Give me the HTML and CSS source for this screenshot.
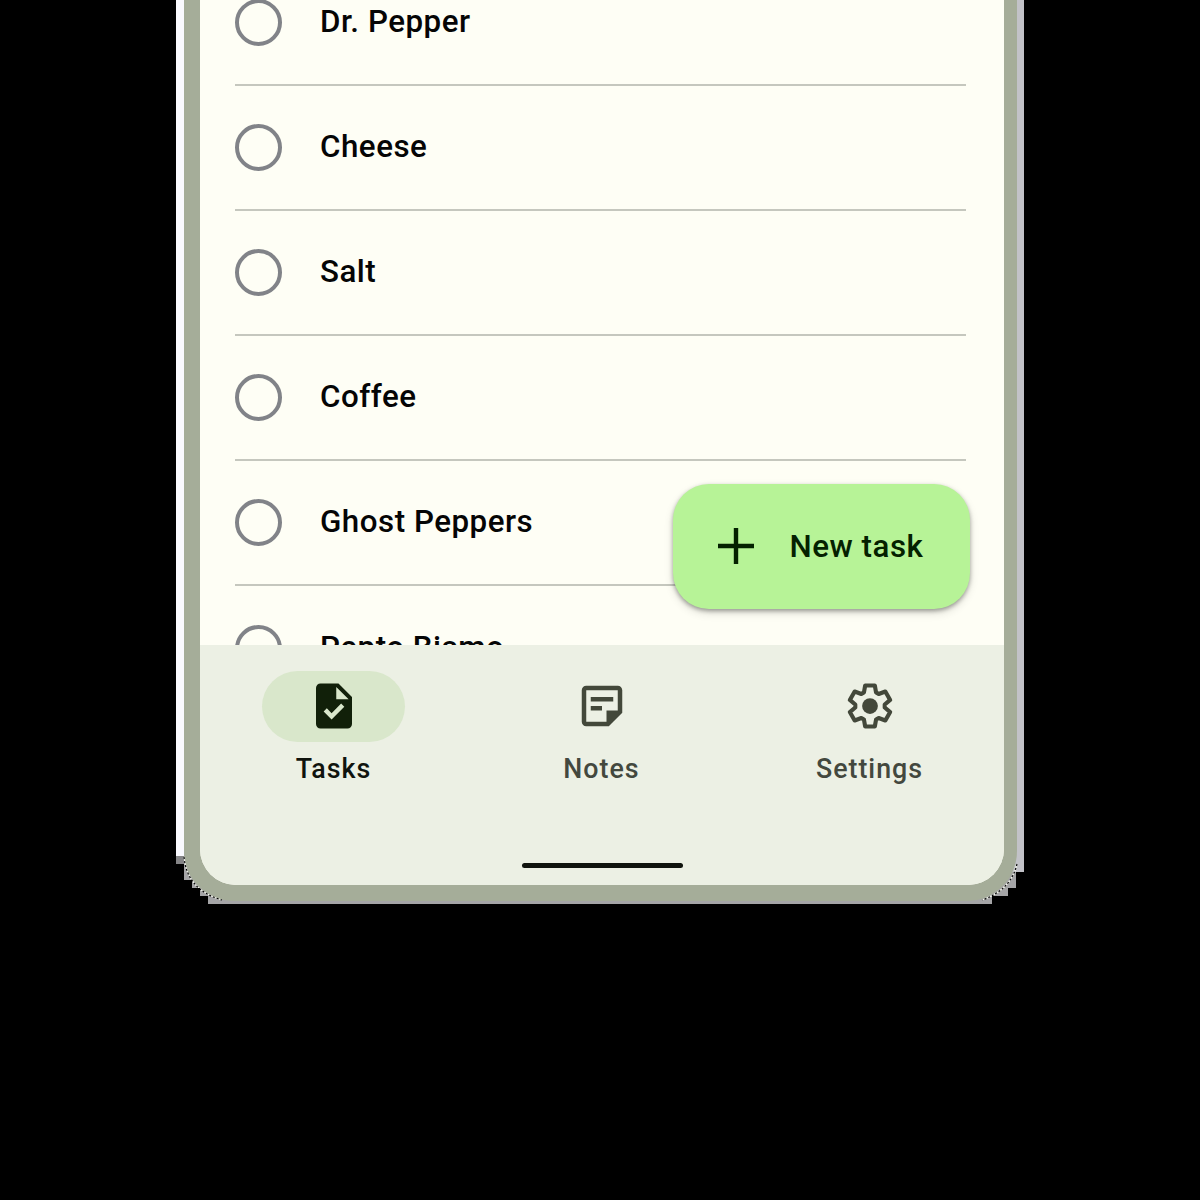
FILE: index.html
```
<!DOCTYPE html>
<html lang="en">
<head>
<meta charset="utf-8">
<title>Tasks</title>
<link rel="stylesheet" href="styles.css">
</head>
<body>
<div class="device">
  <div class="frame">
    <main class="screen">
      <ul class="list">
        <li class="task"><span class="radio"></span><span class="name">Dr. Pepper</span></li>
        <li class="task"><span class="radio"></span><span class="name">Cheese</span></li>
        <li class="task"><span class="radio"></span><span class="name">Salt</span></li>
        <li class="task"><span class="radio"></span><span class="name">Coffee</span></li>
        <li class="task"><span class="radio"></span><span class="name">Ghost Peppers</span></li>
        <li class="task"><span class="radio"></span><span class="name">Pepto Bismo</span></li>
      </ul>
      <button class="fab">
        <svg class="plus" viewBox="0 0 36 36"><path d="M0 18H36M18 0V36"/></svg>
        <span>New task</span>
      </button>
      <nav class="nav">
        <div class="tabs">
          <a class="tab active">
            <span class="pill"><svg class="icon" viewBox="0 0 24 24"><path fill-rule="evenodd" d="M14 2H6c-1.100 0-2 .9-2 2v16c0 1.100.9 2 2 2h12c1.100 0 2-.9 2-2V8zM10.940 18L7.400 14.460l1.410-1.410 2.120 2.120 4.240-4.240 1.410 1.410zM13 9V3.500L18.500 9z"/></svg></span>
            <span class="label">Tasks</span>
          </a>
          <a class="tab">
            <span class="pill"><svg class="icon" viewBox="0 0 24 24"><path fill-rule="evenodd" d="M19 5v9h-5v5H5V5zM19 3H5c-1.100 0-2 .9-2 2v14c0 1.100.9 2 2 2h10l6-6V5c0-1.100-.9-2-2-2zM12 14H7v-2h5zM17 10H7V8h10z"/></svg></span>
            <span class="label">Notes</span>
          </a>
          <a class="tab">
            <span class="pill"><svg class="icon" viewBox="-12 -12 24 24"><path class="gear" d="M-2.700-6L-2.150-9.100H2.150L2.700-6L3.850-5.340L6.810-6.410L8.960-2.690L6.550-.66V.66L8.960 2.690L6.810 6.410L3.850 5.340L2.700 6L2.150 9.100H-2.150L-2.700 6L-3.850 5.340L-6.810 6.410L-8.960 2.690L-6.550 .66V-.66L-8.960-2.690L-6.810-6.410L-3.850-5.340Z"/><circle r="3.500"/></svg></span>
            <span class="label">Settings</span>
          </a>
        </div>
        <div class="handle"></div>
      </nav>
    </main>
  </div>
  <svg class="edge" viewBox="0 0 848 904">
    <path d="M8 857Q11 890 46 900M841 864Q835 890 806 900"/>
    <path class="dash" d="M8 857Q11 890 46 900M841 864Q835 890 806 900"/>
  </svg>
</div>
</body>
</html>
```
FILE: styles.css
```
* { box-sizing: border-box; }
body {
  margin: 0;
  height: 1200px;
  overflow: hidden;
  background: #000;
  font-family: Roboto, sans-serif;
  font-weight: 500;
}
.device {
  position: relative;
  width: 848px;
  height: 904px;
  margin-left: 176px;
  padding: 0 7px 3px 8px;
  background:
    linear-gradient(#fafaff 856px, #858587 856px) 0 0 / 8px 100% no-repeat,
    linear-gradient(#c2c2c8 872px, #a5a5a7 872px) 100% 0 / 50% 100% no-repeat,
    #a5a5a7;
  /* stepped lower corners */
  clip-path: polygon(0 0, 848px 0, 848px 872px, 840px 872px, 840px 888px, 832px 888px, 832px 896px, 816px 896px, 816px 904px, 32px 904px, 32px 896px, 24px 896px, 24px 888px, 16px 888px, 16px 880px, 8px 880px, 8px 864px, 0 864px);
}
.edge {
  position: absolute;
  inset: 0;
  fill: none;
  stroke: #f4f6ec;
  stroke-width: 1.200;
  pointer-events: none;
}
.dash {
  stroke: #000;
  stroke-dasharray: 2 2;
}
.frame {
  height: 901px;
  padding: 0 13.500px 16px 15.500px;
  border-radius: 0 0 50px 50px;
  background: #a5ad99;
}
.screen {
  position: relative;
  display: flex;
  flex-direction: column;
  height: 885px;
  overflow: hidden;
  border-radius: 0 0 36px 36px;
  background: #fefef5;
}
.list {
  height: 645px;
  margin: 0;
  padding: 0 37.500px 0 35.500px;
  overflow: hidden;
  list-style: none;
}
.task {
  display: flex;
  align-items: center;
  gap: 38px;
  height: 125.100px;
  border-bottom: 2px solid #c5c7be;
}
.task:first-child { margin-top: -39px; }
.radio {
  width: 47px;
  height: 47px;
  border: 4.500px solid #818388;
  border-radius: 50%;
}
.name {
  padding-bottom: 2px;
  font-size: 31.300px;
  letter-spacing: 0.520px;
  color: #050505;
}
.fab {
  position: absolute;
  right: 34px;
  bottom: 276px;
  display: flex;
  align-items: center;
  gap: 36px;
  width: 297px;
  height: 125px;
  padding: 0 0 1px 45px;
  border: 0;
  border-radius: 36px;
  background: #b7f397;
  box-shadow: 0 2px 4px #0005, 0 4px 10px #0002;
  color: #042100;
  font: 500 31.300px Roboto, sans-serif;
  letter-spacing: 0.520px;
  white-space: nowrap;
}
.plus {
  width: 36px;
  height: 36px;
  fill: none;
  stroke: #042100;
  stroke-width: 4.400;
}
.nav {
  display: flex;
  flex-direction: column;
  align-items: center;
  height: 240px;
  background: #ecf0e4;
}
.tabs {
  display: flex;
  justify-content: space-between;
  width: 100%;
  height: 218px;
  padding-top: 26px;
}
.tab {
  display: flex;
  flex-direction: column;
  align-items: center;
  flex: 1;
  color: #43483e;
}
.pill {
  display: flex;
  align-items: center;
  justify-content: center;
  width: 143px;
  height: 71px;
  padding-bottom: 1px;
  border-radius: 36px;
}
.active { color: #10140e; }
.active .pill { background: #d9e7cb; }
.active .icon { fill: #112009; }
.icon {
  width: 54px;
  height: 54px;
  fill: #43483a;
}
.gear {
  fill: none;
  stroke: #43483a;
  stroke-width: 1.850;
  stroke-linejoin: round;
}
.label {
  margin-top: 12px;
  font-size: 26.800px;
  line-height: 31px;
  letter-spacing: 1px;
}
.handle {
  width: 161px;
  height: 4.500px;
  margin-left: 2px;
  border-radius: 3px;
  background: #10140e;
}
```
